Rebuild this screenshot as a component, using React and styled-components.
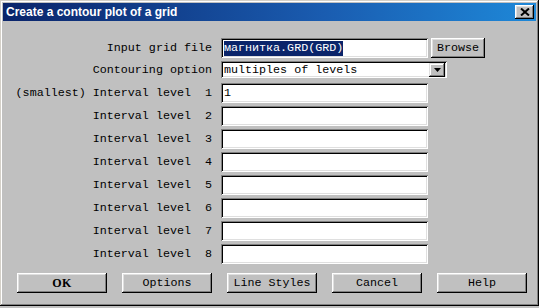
import React from "react";
import styled, { createGlobalStyle } from "styled-components";

const Global = createGlobalStyle`
  html, body { margin: 0; padding: 0; background: #c0c0c0; }
  #root { width: 539px; height: 308px; }
`;

const mono = `"Liberation Mono", "DejaVu Sans Mono", monospace`;

const Window = styled.div`
  box-sizing: border-box;
  width: 539px;
  height: 306px;
  background: #c0c0c0;
  padding: 3px;
  display: flex;
  flex-direction: column;
  box-shadow: inset -1px -1px #000, inset 1px 1px #d4d0c8,
    inset -2px -2px #808080, inset 2px 2px #fff;
  font-family: ${mono};
  font-size: 11.7px;
  color: #000;
`;

const TitleBar = styled.div`
  height: 18px;
  flex: none;
  display: flex;
  align-items: center;
  justify-content: space-between;
  padding: 0 2px 0 3px;
  background: linear-gradient(90deg, #0a246a 0%, #1a5cb0 60%, #1e88d8 100%);
`;

const Title = styled.span`
  font-family: "Liberation Sans", Arial, sans-serif;
  font-weight: bold;
  font-size: 12px;
  color: #fff;
`;

const CloseBtn = styled.div`
  width: 19px;
  height: 14px;
  box-sizing: border-box;
  background: #c0c0c0;
  display: flex;
  align-items: center;
  justify-content: center;
  box-shadow: inset -1px -1px #000, inset 1px 1px #fff,
    inset -2px -2px #808080, inset 2px 2px #dfdfdf;
`;

const Content = styled.div`
  flex: 1;
  display: flex;
  flex-direction: column;
  padding-top: 17px;
`;

const Row = styled.div`
  display: flex;
  align-items: center;
  margin-top: ${(p) => p.$mt || 0}px;
  height: ${(p) => p.$h || 20}px;
`;

const Label = styled.div`
  width: 209px;
  margin-right: 9px;
  text-align: right;
  white-space: pre;
`;

const Sunken = styled.div`
  box-sizing: border-box;
  width: ${(p) => p.$w || 207}px;
  height: 100%;
  background: #fff;
  padding: 0 3px;
  display: flex;
  align-items: center;
  white-space: pre;
  box-shadow: inset 1px 1px #808080, inset -1px -1px #fff,
    inset 2px 2px #000, inset -2px -2px #dfdfdf;
`;

const Selected = styled.span`
  background: #0a246a;
  color: #fff;
  line-height: 15px;
`;

const Button = styled.button`
  box-sizing: border-box;
  width: ${(p) => p.$w || 90}px;
  height: 20px;
  margin-left: ${(p) => p.$ml || 0}px;
  border: none;
  padding: 0;
  background: #c0c0c0;
  font-family: ${mono};
  font-size: 11.7px;
  color: #000;
  white-space: pre;
  box-shadow: inset -1px -1px #000, inset 1px 1px #fff,
    inset -2px -2px #808080, inset 2px 2px #dfdfdf;
`;

const OkText = styled.span`
  font-family: "Liberation Serif", serif;
  font-weight: 900;
  font-size: 12px;
  letter-spacing: 0.5px;
`;

const ArrowBtn = styled.div`
  box-sizing: border-box;
  width: 16px;
  height: 14px;
  margin-left: auto;
  margin-right: -1px;
  background: #c0c0c0;
  display: flex;
  align-items: center;
  justify-content: center;
  box-shadow: inset -1px -1px #000, inset 1px 1px #dfdfdf,
    inset -2px -2px #808080, inset 2px 2px #fff;
`;

const ButtonBar = styled.div`
  display: flex;
  gap: 15px;
  padding-left: 14px;
  margin-top: 9px;
`;

const levels = [1, 2, 3, 4, 5, 6, 7, 8];

export default function App() {
  return (
    <>
      <Global />
      <Window>
        <TitleBar>
          <Title>Create a contour plot of a grid</Title>
          <CloseBtn>
            <svg width="10" height="8" viewBox="0 0 10 8">
              <path d="M1 0.5 L9 7.5 M9 0.5 L1 7.5" stroke="#000" strokeWidth="2" />
            </svg>
          </CloseBtn>
        </TitleBar>
        <Content>
          <Row>
            <Label>Input grid file</Label>
            <Sunken $w={207}>
              <Selected>магнитка.GRD(GRD)</Selected>
            </Sunken>
            <Button $w={54} $ml={3}>Browse</Button>
          </Row>
          <Row $mt={3} $h={17}>
            <Label>Contouring option</Label>
            <Sunken $w={226}>
              multiples of levels
              <ArrowBtn>
                <svg width="7" height="4" viewBox="0 0 7 4">
                  <path d="M0 0 H7 L3.5 4 Z" fill="#000" />
                </svg>
              </ArrowBtn>
            </Sunken>
          </Row>
          {levels.map((n, i) => (
            <Row key={n} $mt={i === 0 ? 5 : 3}>
              <Label>{(n === 1 ? "(smallest) " : "") + "Interval level  " + n}</Label>
              <Sunken $w={207}>{n === 1 ? "1" : ""}</Sunken>
            </Row>
          ))}
          <ButtonBar>
            <Button><OkText>OK</OkText></Button>
            <Button>Options</Button>
            <Button>Line Styles</Button>
            <Button>Cancel</Button>
            <Button>Help</Button>
          </ButtonBar>
        </Content>
      </Window>
    </>
  );
}
